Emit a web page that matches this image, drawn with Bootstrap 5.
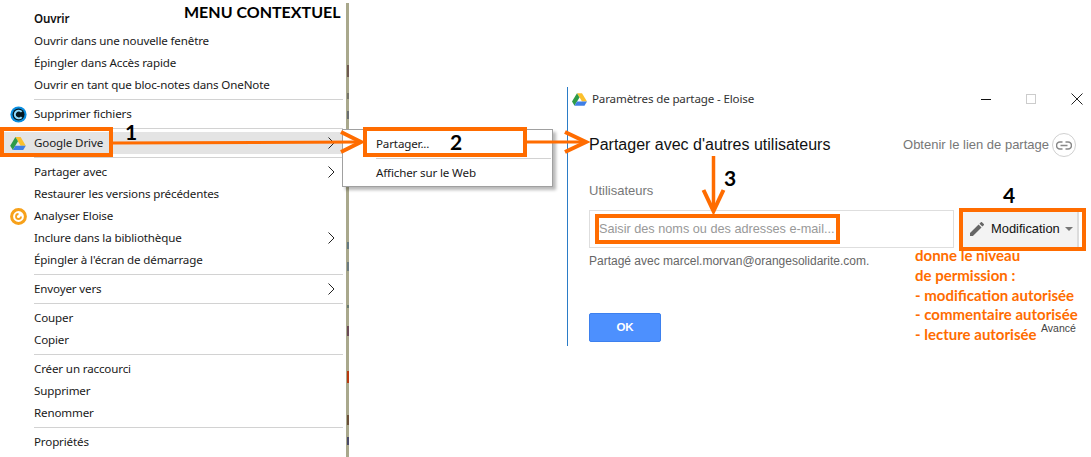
<!doctype html>
<html lang="fr">
<head>
<meta charset="utf-8">
<title>Menu contextuel</title>
<link href="https://cdn.jsdelivr.net/npm/bootstrap@5.3.0/dist/css/bootstrap.min.css" rel="stylesheet">
<style>
html,body{margin:0;background:#fff;overflow:hidden}
.stage{position:relative;width:1091px;height:457px;font-family:"Liberation Sans",Arial,sans-serif}
.ctx{width:346px;flex:none;padding:8px 0 0;margin:0;list-style:none;font:11.6px/22px "Noto Sans",sans-serif;letter-spacing:-.15px;color:#1a1a1a}
.ctx-row{height:22px;padding-right:11px}
.ctx-row.on{background:#e4e4e4}
.ctx-ico{width:34px;flex:none;padding-left:10px;height:22px}
.ctx-sep{height:1px;background:#d2d2d2;margin:3px 3px 3px 34px}
.ctx-strong{font-weight:600;color:#111}
.chev{width:7px;height:12px;flex:none}
.strip{width:3px;flex:none;margin-top:3px;height:454px;background-color:#a9a88c;background-size:2px 100%;background-repeat:no-repeat;background-position:right top;background-image:linear-gradient(to bottom,
 #a9a88c 62px,#6e5a50 62px,#6e5a50 74px,#a9a88c 74px,#a9a88c 90px,#77766a 90px,#77766a 96px,#a9a88c 96px,
 #a9a88c 108px,#6b6f70 108px,#6b6f70 116px,#a9a88c 116px,#a9a88c 239px,#667a80 239px,#667a80 246px,#a9a88c 246px,
 #a9a88c 259px,#6c7b7e 259px,#6c7b7e 268px,#a9a88c 268px,#a9a88c 302px,#6a7a70 302px,#6a7a70 305px,#a9a88c 305px,
 #a9a88c 323px,#6a4a55 323px,#6a4a55 333px,#a9a88c 333px,#a9a88c 368px,#b83a10 368px,#b83a10 380px,#a9a88c 380px,
 #a9a88c 412px,#6a5038 412px,#6a5038 422px,#a9a88c 422px,#a9a88c 434px,#4a4a68 434px,#4a4a68 442px,#a9a88c 442px)}
.dlg{margin-left:218px;margin-top:87px;width:524px;height:259px;flex:none;border-left:1px solid #2b7cc7;padding-left:21px;position:relative}
.dlg-head{height:24px;margin-left:-17px;padding-right:8px;font:11.6px/24px "Noto Sans",sans-serif;letter-spacing:-.15px;color:#333}
.dlg-name{margin-left:5px}
.win-ico{width:12px;height:12px;margin-left:33px;flex:none}
.dlg-titlebar{margin-top:22px;height:24px;padding-right:15px}
.dlg-h{font-size:16px;line-height:24px;color:#111;margin:0;font-weight:400}
.lnk{font-size:13px;color:#777;line-height:24px}
.lnk-ico{width:24px;height:24px;border:1px solid #d0d0d0;border-radius:50%;margin-left:3px}
.lbl{margin-top:26px;font-size:13px;line-height:16px;color:#777}
.share-row{margin-top:11px;height:38px}
.who{width:365px;height:38px;flex:none;border:1px solid #dedede;border-radius:0;padding:0 9px;font-size:12.7px;line-height:36px;color:#999;box-shadow:none;white-space:nowrap;overflow:hidden}
.perm{margin-left:9px;width:116px;height:38px;flex:none;padding:0 0 0 7px;background:#f3f3f3;border:0;border-radius:0;border-right:2px solid #dcdcdc;font-size:12.9px;color:#111;gap:7px;--bs-btn-hover-bg:#f3f3f3}
.pencil{flex:none}
.caret-d{width:0;height:0;border:4px solid transparent;border-top-color:#777;border-bottom:0;margin-left:-2px}
.shared{margin-top:5px;font-size:12px;line-height:16px;color:#666}
.ok{margin-top:44px;width:72px;height:29px;padding:0;background:#4d90fe;border:1px solid #3d80ee;border-radius:2px;color:#fff;font-size:11.5px;font-weight:700;--bs-btn-hover-bg:#4d90fe;--bs-btn-hover-color:#fff}
.sub{position:absolute;left:342px;top:129px;width:211px;height:58px;background:#fff;border:1px solid #a0a0a0;box-shadow:3px 3px 3px rgba(0,0,0,.28);margin:0;padding:3px 0 0;list-style:none;font:11.6px/22px "Noto Sans",sans-serif;letter-spacing:-.15px;color:#1a1a1a}
.sub-row{height:22px;padding-left:33px}
.sub-sep{height:1px;background:#d2d2d2;margin:3px 1px 3px 33px}
.frame{position:absolute;border:4px solid #ff6c00}
.f1{left:0;top:127px;width:113px;height:30px}
.f2{left:363px;top:127px;width:164px;height:30px}
.f3{left:595px;top:214px;width:245px;height:30px}
.f4{left:959px;top:208px;width:127px;height:43px}
.arrows{position:absolute;left:0;top:0;pointer-events:none}
.note{position:absolute;font-family:Lato,sans-serif;font-weight:700;color:#000;white-space:nowrap;line-height:1}
.n-title{left:184px;top:4px;font-size:16px}
.n{font-size:21px}
.n1{left:125px;top:121px}
.n2{left:450px;top:131px}
.n3{left:724px;top:167px}
.n4{left:1003px;top:184px}
.perm-note{position:absolute;left:915px;top:246px;margin:0;padding:0;list-style:none;font:700 15px/19.8px Lato,sans-serif;color:#ff6c00;white-space:nowrap}
.adv{position:absolute;left:1041px;top:322px;font-size:10.5px;line-height:13px;color:#444}
</style>
</head>
<body>
<div class="stage d-flex">
  <ul class="ctx">
    <li class="ctx-row d-flex align-items-center"><span class="ctx-ico"></span><span class="ctx-strong">Ouvrir</span></li>
    <li class="ctx-row d-flex align-items-center"><span class="ctx-ico"></span>Ouvrir dans une nouvelle fenêtre</li>
    <li class="ctx-row d-flex align-items-center"><span class="ctx-ico"></span>Épingler dans Accès rapide</li>
    <li class="ctx-row d-flex align-items-center"><span class="ctx-ico"></span>Ouvrir en tant que bloc-notes dans OneNote</li>
    <li class="ctx-sep"></li>
    <li class="ctx-row d-flex align-items-center">
      <span class="ctx-ico d-flex align-items-center"><svg width="17" height="17" viewBox="0 0 21 21"><circle cx="10.5" cy="10.5" r="10" fill="#0a8ee0"/><circle cx="10.5" cy="10.5" r="7.4" fill="#06181f"/><path d="M14.4 7.4a4.8 4.8 0 1 0 0 6.2" fill="none" stroke="#8fdcff" stroke-width="2.4"/></svg></span>Supprimer fichiers</li>
    <li class="ctx-sep"></li>
    <li class="ctx-row on d-flex align-items-center">
      <span class="ctx-ico d-flex align-items-center"><svg width="16" height="13" viewBox="0 0 18 15"><path d="M6 0h6l6 10h-6z" fill="#fbc02d"/><path d="M6 0l3 5-6 10L0 10z" fill="#2e9b48"/><path d="M6 10h12l-3 5H3z" fill="#3f7fe6"/></svg></span>Google Drive
      <svg class="chev ms-auto" viewBox="0 0 7 12"><path d="M.5.5 6 6 .5 11.5" fill="none" stroke="#222" stroke-width="1"/></svg></li>
    <li class="ctx-sep"></li>
    <li class="ctx-row d-flex align-items-center"><span class="ctx-ico"></span>Partager avec
      <svg class="chev ms-auto" viewBox="0 0 7 12"><path d="M.5.5 6 6 .5 11.5" fill="none" stroke="#222" stroke-width="1"/></svg></li>
    <li class="ctx-row d-flex align-items-center"><span class="ctx-ico"></span>Restaurer les versions précédentes</li>
    <li class="ctx-row d-flex align-items-center">
      <span class="ctx-ico d-flex align-items-center"><svg width="17" height="17" viewBox="0 0 17 17"><circle cx="8.5" cy="8.5" r="6.9" fill="none" stroke="#f7a11a" stroke-width="3"/><path d="M11 8.5A2.5 2.5 0 1 1 8.5 6" fill="none" stroke="#f7a11a" stroke-width="1.8"/></svg></span>Analyser Eloise</li>
    <li class="ctx-row d-flex align-items-center"><span class="ctx-ico"></span>Inclure dans la bibliothèque
      <svg class="chev ms-auto" viewBox="0 0 7 12"><path d="M.5.5 6 6 .5 11.5" fill="none" stroke="#222" stroke-width="1"/></svg></li>
    <li class="ctx-row d-flex align-items-center"><span class="ctx-ico"></span>Épingler à l'écran de démarrage</li>
    <li class="ctx-sep"></li>
    <li class="ctx-row d-flex align-items-center"><span class="ctx-ico"></span>Envoyer vers
      <svg class="chev ms-auto" viewBox="0 0 7 12"><path d="M.5.5 6 6 .5 11.5" fill="none" stroke="#222" stroke-width="1"/></svg></li>
    <li class="ctx-sep"></li>
    <li class="ctx-row d-flex align-items-center"><span class="ctx-ico"></span>Couper</li>
    <li class="ctx-row d-flex align-items-center"><span class="ctx-ico"></span>Copier</li>
    <li class="ctx-sep"></li>
    <li class="ctx-row d-flex align-items-center"><span class="ctx-ico"></span>Créer un raccourci</li>
    <li class="ctx-row d-flex align-items-center"><span class="ctx-ico"></span>Supprimer</li>
    <li class="ctx-row d-flex align-items-center"><span class="ctx-ico"></span>Renommer</li>
    <li class="ctx-sep"></li>
    <li class="ctx-row d-flex align-items-center"><span class="ctx-ico"></span>Propriétés</li>
  </ul>
  <div class="strip"></div>

  <section class="dlg">
    <div class="dlg-head d-flex align-items-center">
      <svg width="15" height="13" viewBox="0 0 18 15"><path d="M6 0h6l6 10h-6z" fill="#fbc02d"/><path d="M6 0l3 5-6 10L0 10z" fill="#2e9b48"/><path d="M6 10h12l-3 5H3z" fill="#3f7fe6"/></svg>
      <span class="dlg-name flex-grow-1">Paramètres de partage - Eloise</span>
      <svg class="win-ico" viewBox="0 0 12 12"><path d="M0 6.5h10" stroke="#111" stroke-width="1"/></svg>
      <svg class="win-ico" viewBox="0 0 12 12"><rect x=".5" y="1.5" width="9" height="9" fill="none" stroke="#ccc"/></svg>
      <svg class="win-ico" viewBox="0 0 12 12"><path d="M.5.5l11 11M11.5.5l-11 11" stroke="#222" stroke-width="1"/></svg>
    </div>
    <div class="dlg-titlebar d-flex align-items-center justify-content-between">
      <h1 class="dlg-h">Partager avec d'autres utilisateurs</h1>
      <div class="d-flex align-items-center">
        <span class="lnk">Obtenir le lien de partage</span>
        <span class="lnk-ico d-flex align-items-center justify-content-center"><svg width="16" height="9" viewBox="0 0 16 9"><path d="M6.5 1H4a3.5 3.5 0 0 0 0 7h2.5M9.5 1H12a3.5 3.5 0 0 1 0 7H9.5M4.5 4.5h7" fill="none" stroke="#888" stroke-width="1.6"/></svg></span>
      </div>
    </div>
    <div class="lbl">Utilisateurs</div>
    <div class="share-row d-flex">
      <div class="form-control who">Saisir des noms ou des adresses e-mail...</div>
      <button type="button" class="btn perm d-flex align-items-center">
        <svg class="pencil" width="14" height="14" viewBox="3 3 18 18"><path d="M3 17.25V21h3.75L17.81 9.94l-3.75-3.75L3 17.25zM20.71 7.04a1 1 0 0 0 0-1.41l-2.34-2.34a1 1 0 0 0-1.41 0l-1.83 1.83 3.75 3.75 1.83-1.83z" fill="#666"/></svg>
        <span>Modification</span><span class="caret-d"></span>
      </button>
    </div>
    <div class="shared">Partagé avec marcel.morvan@orangesolidarite.com.</div>
    <button type="button" class="btn ok d-block">OK</button>
  </section>

  <ul class="sub">
    <li class="sub-row">Partager...</li>
    <li class="sub-sep"></li>
    <li class="sub-row">Afficher sur le Web</li>
  </ul>

  <div class="adv">Avancé</div>

  <svg class="arrows" width="1091" height="457" viewBox="0 0 1091 457" fill="none" stroke="#ff6c00">
    <path d="M113 143 360 142" stroke-width="3"/>
    <path d="M341 132l20 10-20 10" stroke-width="4"/>
    <path d="M527 142H585" stroke-width="3"/>
    <path d="M565 132l21 10-21 10" stroke-width="4"/>
    <path d="M713.5 156V210" stroke-width="3.5"/>
    <path d="M703.5 190l10 21 10-21" stroke-width="4"/>
  </svg>
  <div class="frame f1"></div>
  <div class="frame f2"></div>
  <div class="frame f3"></div>
  <div class="frame f4"></div>

  <div class="note n-title">MENU CONTEXTUEL</div>
  <div class="note n n1">1</div>
  <div class="note n n2">2</div>
  <div class="note n n3">3</div>
  <div class="note n n4">4</div>
  <ul class="perm-note">
    <li>donne le niveau</li>
    <li>de permission :</li>
    <li>- modification autorisée</li>
    <li>- commentaire autorisée</li>
    <li>- lecture autorisée</li>
  </ul>
</div>
</body>
</html>
